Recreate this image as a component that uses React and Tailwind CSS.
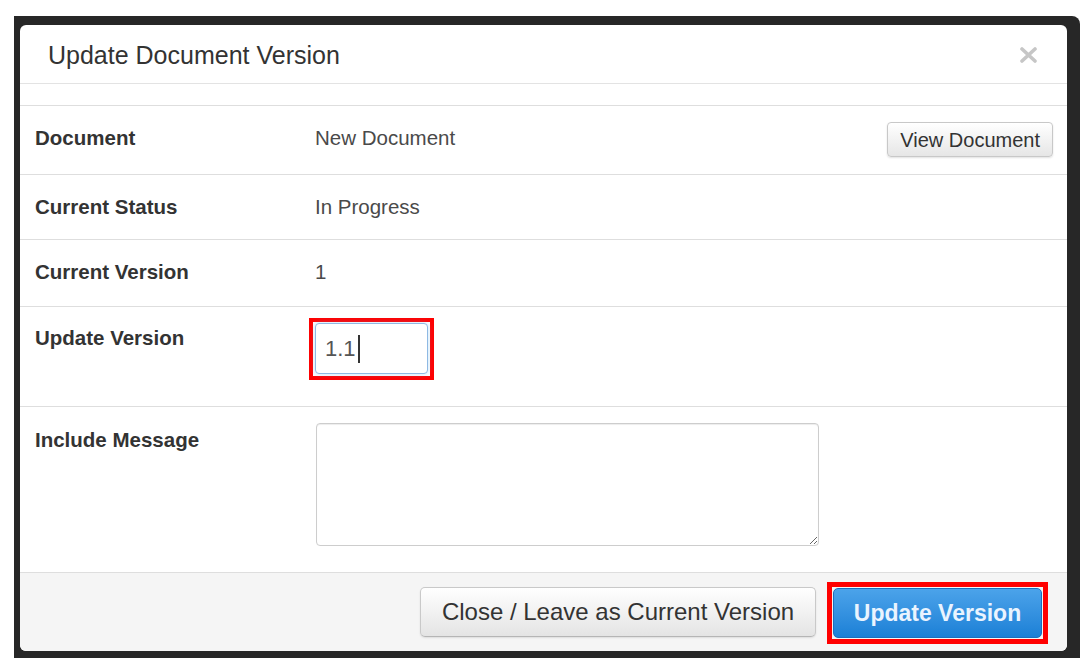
export default function App() {
  return (
    <div className="w-[1090px] h-[671px] bg-white pt-[16px] pl-[14px] font-['Liberation_Sans',Arial,sans-serif]">
      <div className="w-[1066px] h-[642px] bg-[#272727] rounded-tr-[8px] pt-[9px] pl-[6px] pr-[13px] pb-[7px]">
        <div className="w-full h-full bg-white rounded-[6px] flex flex-col overflow-hidden">
          {/* header */}
          <div className="h-[59px] shrink-0 border-b border-[#e3e3e3] flex items-center justify-between pl-[28px] pr-[30px]">
            <div className="text-[25px] leading-[30px] text-[#333] pt-[1px]">Update Document Version</div>
            <svg width="17" height="16" viewBox="0 0 17 16" className="mt-[2px]">
              <path d="M2 2 L15 14 M15 2 L2 14" stroke="#c6c6c6" strokeWidth="3.6" strokeLinecap="round" />
            </svg>
          </div>
          <div className="h-[22px] shrink-0 border-b border-[#dedede]" />

          {/* Document */}
          <div className="h-[69px] shrink-0 border-b border-[#dedede] flex items-start">
            <div className="w-[295px] shrink-0 pl-[15px] pt-[20px] text-[20.5px] leading-[24px] font-bold text-[#333]">Document</div>
            <div className="flex-1 pt-[20px] text-[20.5px] leading-[24px] text-[#4a4a4a]">New Document</div>
            <button className="mt-[16px] mr-[14px] h-[35px] px-[12px] rounded-[4px] border border-[#c8c8c8] bg-gradient-to-b from-white to-[#e6e6e6] shadow-[0_1px_2px_rgba(0,0,0,0.12)] text-[20px] leading-[24px] text-[#333]">
              View Document
            </button>
          </div>

          {/* Current Status */}
          <div className="h-[65px] shrink-0 border-b border-[#dedede] flex items-start">
            <div className="w-[295px] shrink-0 pl-[15px] pt-[20px] text-[20.5px] leading-[24px] font-bold text-[#333]">Current Status</div>
            <div className="flex-1 pt-[20px] text-[20.5px] leading-[24px] text-[#4a4a4a]">In Progress</div>
          </div>

          {/* Current Version */}
          <div className="h-[67px] shrink-0 border-b border-[#dedede] flex items-start">
            <div className="w-[295px] shrink-0 pl-[15px] pt-[20px] text-[20.5px] leading-[24px] font-bold text-[#333]">Current Version</div>
            <div className="flex-1 pt-[20px] text-[20.5px] leading-[24px] text-[#4a4a4a]">1</div>
          </div>

          {/* Update Version */}
          <div className="h-[100px] shrink-0 border-b border-[#dedede] flex items-start">
            <div className="w-[289px] shrink-0 pl-[15px] pt-[19px] text-[20.5px] leading-[24px] font-bold text-[#333]">Update Version</div>
            <div className="mt-[11px] border-[4px] border-[#ff0000] p-[2px] pt-[1px]">
              <div className="w-[113px] h-[51px] rounded-[4px] border border-[#8fb9e3] shadow-[0_0_6px_rgba(82,168,236,0.35)] bg-white flex items-center pl-[9px]">
                <span className="text-[22px] leading-[26px] text-[#555]">1.1</span>
                <span className="w-[2px] h-[28px] bg-[#333] ml-[2px]" />
              </div>
            </div>
          </div>

          {/* Include Message */}
          <div className="h-[165px] shrink-0 flex items-start">
            <div className="w-[296px] shrink-0 pl-[15px] pt-[21px] text-[20.5px] leading-[24px] font-bold text-[#333]">Include Message</div>
            <textarea
              readOnly
              className="mt-[16px] w-[503px] h-[123px] rounded-[4px] border border-[#cdcdcd] shadow-[inset_0_1px_1px_rgba(0,0,0,0.075)] bg-white outline-none"
            />
          </div>

          {/* footer */}
          <div className="flex-1 border-t border-[#dedede] bg-[#f5f5f5] flex items-center justify-end pr-[19px]">
            <button className="h-[50px] w-[396px] rounded-[5px] border border-[#c9c9c9] border-b-[#b5b5b5] bg-gradient-to-b from-white to-[#e4e4e4] shadow-[0_1px_2px_rgba(0,0,0,0.1)] text-[24px] leading-[28px] text-[#333] mr-[11px]">
              Close / Leave as Current Version
            </button>
            <div className="border-[5px] border-[#ff0000] p-[1px] mt-[1px]">
              <button className="h-[50px] w-[209px] rounded-[5px] border border-[#1b6fbd] bg-gradient-to-b from-[#4ba3ea] to-[#1a80d6] text-[23px] leading-[28px] font-bold text-[#eaf4ff]">
                Update Version
              </button>
            </div>
          </div>
        </div>
      </div>
    </div>
  );
}
